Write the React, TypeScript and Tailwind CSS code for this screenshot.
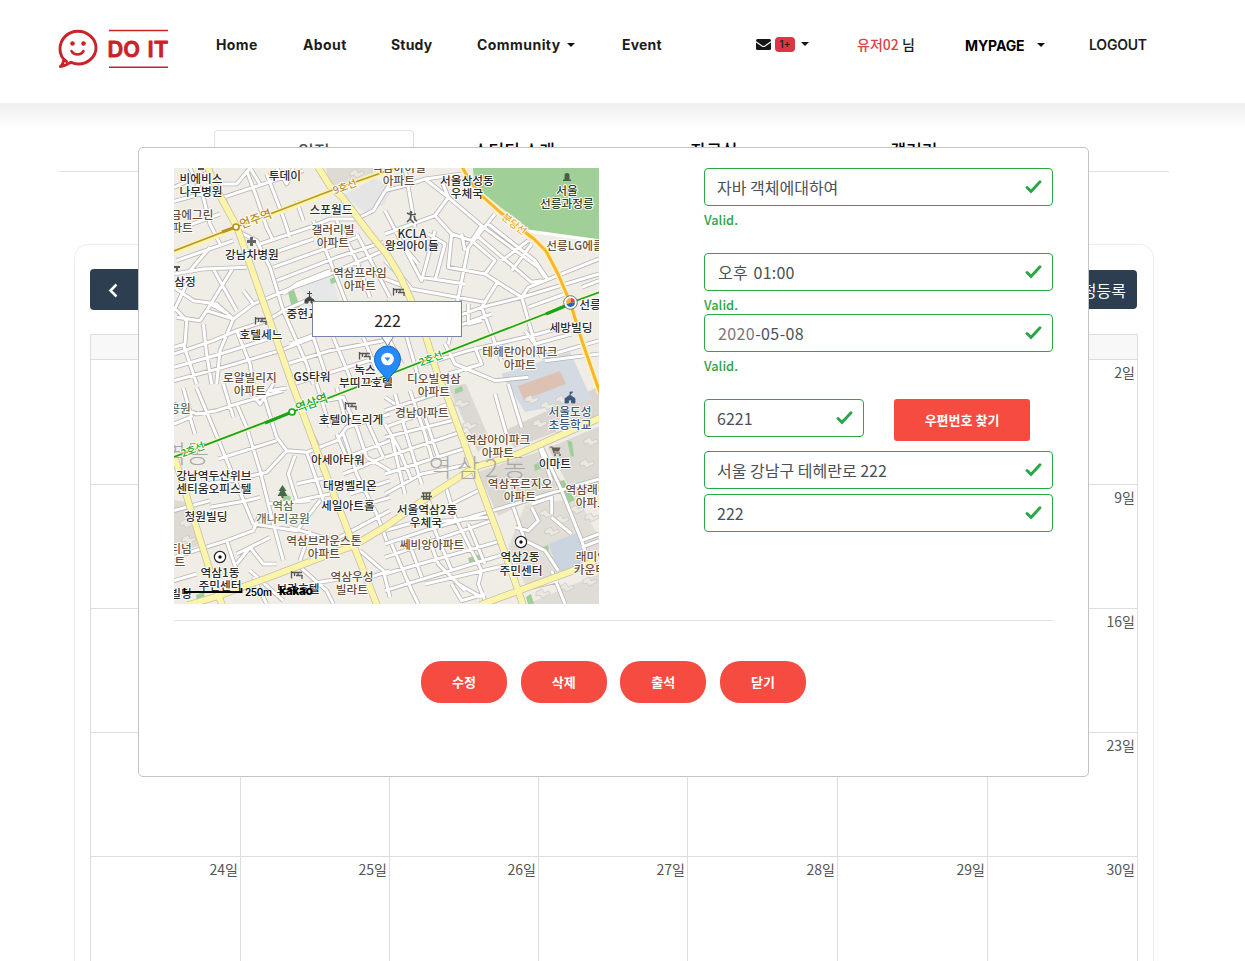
import React from "react";

const KR = "font-['Noto_Sans_CJK_KR','Noto_Sans',sans-serif]";

type Tile = { x: number; y: number; roads: string[] };

// Street segments; each tile is drawn at three units per map pixel.
const tiles: Tile[] = [
  {
    x: 170,
    y: 164,
    roads: [
      "M12 70L60 48L130 20", "M12 112L130 80L160 100L400 20", "M60 12L100 100L120 180L150 240", "M150 60L200 60L240 12",
      "M230 20L260 100L290 190L310 230", "M290 30L340 160L360 220", "M160 100L190 170", "M380 110L400 170", "M12 200L150 150",
      "M20 290L190 230", "M12 330L100 315L230 310", "M190 310L110 440", "M60 320L120 250", "M130 315L200 440",
      "M12 370L70 410L140 420L190 465", "M12 430L50 470L45 540L12 550", "M50 360L12 440", "M110 440L190 465L250 420L370 370L480 330L640 260",
      "M120 420L175 450", "M200 200L260 230L300 310L340 440L410 600L430 660", "M270 240L420 190L480 165L560 165L610 140L640 90L660 60",
      "M300 270L430 225", "M310 310L560 220", "M320 350L500 280L640 235", "M340 390L380 360L480 320", "M430 170L480 290L530 420",
      "M500 170L560 290L600 400", "M560 210L660 400", "M190 465L150 560L140 660", "M12 570L130 530L200 500L290 470L340 440",
      "M12 610L150 570L310 520", "M40 540L60 600L80 660", "M100 480L110 570L125 660", "M200 500L240 600L250 660",
      "M12 650L160 610L330 560L430 520", "M350 600L480 560L640 530", "M370 660L660 570", "M430 520L470 640", "M490 520L540 640",
      "M580 520L620 620", "M340 440L430 400", "M360 540L440 510L560 510", "M20 460L90 470L110 440", "M220 380L250 420",
      "M240 12L270 60", "M320 12L350 60L370 12",
    ],
  },
  {
    x: 385,
    y: 164,
    roads: [
      "M0 80L60 65L120 45L230 30", "M60 12L80 130L90 190", "M120 45L190 100L150 155L0 210", "M190 100L290 185L260 230L200 210",
      "M150 155L200 210L190 310L300 330L330 290L260 230", "M130 210L180 240L150 350", "M150 200L110 350L0 140", "M110 340L240 360",
      "M80 375L300 415", "M330 150L250 250L220 400L190 540", "M290 185L460 310L480 340", "M270 210L440 355L470 350",
      "M310 180L450 290L490 350", "M350 290L430 230", "M380 320L440 240", "M300 330L410 400L430 370L642 285", "M410 400L642 330",
      "M340 350L290 430L350 590", "M180 470L290 430L410 400", "M410 400L450 540L470 580", "M430 430L540 390", "M290 470L250 480L250 420",
      "M180 500L320 450", "M180 540L210 600L330 650L430 640", "M120 600L250 560L460 510L530 490", "M190 630L290 600L270 550",
      "M470 580L642 530", "M420 500L450 540L560 510", "M0 290L60 350L80 375L0 345", "M0 410L60 500L100 640", "M50 240L100 300",
      "M480 590L642 570", "M590 370L642 350", "M230 210L240 260", "M0 500L50 600", "M170 50L190 100",
    ],
  },
  {
    x: 170,
    y: 384,
    roads: [
      "M12 60L80 90L140 80L200 60L340 20", "M80 12L150 180L250 420", "M12 120L60 100L75 150", "M40 12L65 100", "M160 0L190 100",
      "M200 60L230 130L270 260L310 420", "M280 30L320 160L350 200L410 205L500 170L530 130L660 90", "M145 225L320 170",
      "M180 290L290 265L350 200", "M375 215L355 270L380 350L480 330", "M380 300L470 280", "M410 205L430 260L460 350",
      "M100 300L180 290", "M120 370L230 350L270 340", "M12 380L120 350", "M12 520L170 470L250 440L270 390", "M170 470L200 560L180 620",
      "M250 420L380 440L450 350", "M290 360L420 350", "M310 420L340 530", "M360 430L490 470L660 380", "M420 440L390 530",
      "M200 540L240 490L300 460", "M200 510L240 490L280 540L320 540", "M240 560L340 650", "M380 540L470 620L490 660",
      "M520 150L560 270L620 390", "M560 130L590 220L660 260", "M590 110L640 220", "M500 150L530 220L660 170", "M520 270L640 220",
      "M540 330L660 290", "M560 370L660 340", "M620 390L650 470", "M570 500L640 560L660 640", "M600 580L660 560",
      "M300 20L350 12", "M400 100L450 200", "M230 12L270 60L310 0", "M410 60L520 40L560 130", "M440 0L480 130", "M500 10L530 120",
      "M250 580L290 660", "M12 590L80 570", "M420 600L590 570",
    ],
  },
  {
    x: 385,
    y: 384,
    roads: [
      "M0 80L180 20", "M0 130L190 60", "M0 160L200 110", "M30 30L70 170L110 300", "M75 20L120 150L140 220", "M120 100L160 220",
      "M0 220L240 140", "M0 270L250 190", "M20 160L60 330", "M0 330L110 270L260 240", "M30 60L0 40", "M0 120L40 190L80 290",
      "M110 350L150 440L200 560", "M180 300L210 400L290 560", "M200 360L280 320", "M0 440L70 420L310 400", "M0 480L120 440L642 285",
      "M0 520L320 410", "M20 480L80 620L100 660", "M0 570L350 470", "M70 470L110 580", "M130 460L160 540L240 620",
      "M0 620L360 510", "M120 600L380 540", "M220 600L290 640", "M200 600L230 650L300 630", "M290 560L280 600L300 650",
      "M385 370L420 470L480 500L520 560", "M440 370L460 410L430 440L390 430", "M470 190L530 320L590 470L600 500",
      "M500 400L560 450", "M440 360L500 340L500 390", "M590 470L642 450", "M590 490L642 470", "M330 30L370 170", "M370 0L410 130",
      "M460 180L500 290", "M160 420L130 350", "M500 560L540 660", "M440 610L520 590", "M250 420L300 540",
    ],
  },
];

const majorRoads = [
  "M208 168L218 192L237 227L264 304L292 384L317 451L353 544L377 605",
  "M318 167L330 186L342 197L370 234L388 256L400 276L422 324L438 376L447 396L473 467L498 534L518 590L523 605",
  "M188 605L215 597L270 577L330 554L353 546L385 527L428 497L475 467L518 454L600 418",
  "M480 605L518 591L572 571L600 558",
  "M174 455L190 507L210 571L222 605",
];

const blocks: [string, string][] = [
  ["M326 168H398L330 188Z", "#dfdbd4"],
  ["M344 195L375 178L392 190L384 205L364 212Z", "#e5e5e6"],
  ["M300 284L330 274L345 318L312 318Z", "#e6e7e8"],
  ["M448 386L466 384L490 440L478 452Z", "#dcd8d3"],
  ["M506 430L600 386V415L514 448Z", "#dad6cf"],
  ["M478 472L538 452L564 484L498 516Z", "#dcd8d2"],
  ["M548 448L600 426V488L575 498Z", "#dcd8d2"],
  ["M525 505L578 498L600 540V556L525 585L508 548Z", "#e1ddd7"],
  ["M174 500L187 502L202 545L174 552Z", "#dedad2"],
  ["M527 604L599 574V604Z", "#dfdbd6"],
  ["M501 374L570 352L592 400L525 412Z", "#d3dae2"],
  ["M518 386L560 371L566 384L524 400Z", "#ddc2b4"],
  ["M549 544L577 533L587 566L558 572Z", "#cad5df"],
];

const greens = [
  "M473 168H599V240L530 231L518 220L504 210L484 194L474 181Z",
  "M288 292L294 290L300 307L292 309Z", "M330 279L338 275L340 281L331 284Z", "M281 494L290 496L292 501L283 501Z",
  "M468 558L480 554L481 560L470 565Z", "M534 465L541 461L542 468L535 471Z", "M556 483L564 480L575 500L566 504Z",
  "M541 548L548 545L549 550L544 552Z", "M526 597L531 594L534 604H528Z", "M196 595L204 592L205 600L197 602Z",
  "M455 389L462 386L463 391L455 394Z", "M567 440L572 442L574 456L571 457Z",
];

const aptOutlines = [
  [525, 398], [541, 404], [556, 398], [533, 422], [551, 427], [584, 440], [580, 462], [518, 478], [504, 488], [537, 480],
  [540, 512], [555, 518], [570, 508], [545, 530], [585, 516], [536, 592], [560, 586], [583, 580], [350, 172], [372, 170],
  [455, 402], [463, 424], [180, 522], [182, 538],
];

type Label = [x: number, y: number, text: string, fill?: string];
const BR = "#67503b";
const DK = "#2b2b2b";
const labels: Label[] = [
  [201, 182, "비에비스"], [201, 195, "나무병원"], [285, 179, "투데이"], [331, 213, "스포월드"],
  [399, 171, "역삼아이빌", BR], [399, 184, "아파트", BR], [467, 184, "서울삼성동"], [467, 197, "우체국"],
  [567, 194, "서울", "#2d432a"], [567, 207, "선릉과정릉", "#2d432a"],
  [192, 218, "금에그린", BR], [182, 231, "파트", BR], [333, 233, "갤러리빌", BR], [333, 246, "아파트", BR],
  [412, 237, "KCLA"], [412, 249, "왕의아이들"], [575, 249, "선릉LG에클", BR], [252, 258, "강남차병원"],
  [360, 276, "역삼프라임", BR], [360, 289, "아파트", BR], [185, 285, "삼정"], [308, 317, "중현교회"],
  [590, 308, "선릉"], [571, 331, "세방빌딩"], [261, 338, "호텔세느"],
  [520, 355, "테헤란아이파크", BR], [520, 368, "아파트", BR],
  [250, 381, "로얄빌리지", BR], [250, 394, "아파트", BR], [312, 380, "GS타워"], [365, 373, "녹스"], [366, 386, "부띠끄호텔"],
  [434, 382, "디오빌역삼", BR], [434, 395, "아파트", BR], [180, 412, "공원", "#5c7258"],
  [351, 423, "호텔아드리게"], [422, 416, "경남아파트", BR], [570, 415, "서울도성", "#3d5878"], [570, 428, "초등학교", "#3d5878"],
  [498, 443, "역삼아이파크", BR], [498, 456, "아파트", BR], [338, 463, "아세아타워"], [555, 467, "이마트"],
  [214, 479, "강남역두산위브"], [214, 492, "센티움오피스텔"], [350, 489, "대명벨리온"],
  [520, 487, "역삼푸르지오", BR], [520, 500, "아파트", BR], [587, 493, "역삼래미", BR], [592, 506, "아파트", BR],
  [283, 509, "역삼", "#5c7258"], [283, 522, "개나리공원", "#5c7258"], [348, 509, "세일아트홀"],
  [427, 513, "서울역삼2동"], [426, 526, "우체국"], [206, 520, "청원빌딩"],
  [324, 544, "역삼브라운스톤", BR], [324, 557, "아파트", BR], [432, 548, "쎄비앙아파트", BR],
  [181, 552, "티넘", BR], [180, 565, "트", BR], [520, 560, "역삼2동"], [521, 574, "주민센터"],
  [592, 560, "래미안", BR], [590, 573, "카운티", BR], [220, 576, "역삼1동"], [220, 589, "주민센터"],
  [352, 580, "역삼우성", BR], [352, 593, "빌라트", BR], [181, 597, "빌딩"], [298, 592, "브라호텔"],
];

function Bed({ x, y }: { x: number; y: number }) {
  return <path transform={`translate(${x} ${y})`} d="M.5 0V7.500M0 1.500H11M3.500 1.500V5M5 4.500H11V8M7 1.500V4.500" fill="none" stroke="#555" strokeWidth="1.300" />;
}

function StreetMap() {
  return (
    <svg className="block h-[436px] w-[425px] font-['Noto_Sans_CJK_KR',sans-serif]" viewBox="174 168 425 436">
      <rect x="174" y="168" width="425" height="436" fill="#f0ede7" />
      {blocks.map(([d, fill]) => <path key={d} d={d} fill={fill} />)}
      {greens.map((d, i) => <path key={d} d={d} fill={i === 0 ? "#a0d097" : "#9dcf99"} />)}
      {aptOutlines.map(([x, y]) => (
        <path key={`${x}-${y}`} d={`M${x} ${y}l6 -3 2 4 5 -2 1 3 -8 4 -2 -3 -4 1z`} fill="#ebe8e3" stroke="#c9c5bf" strokeWidth=".7" />
      ))}
      <g fill="none" strokeLinejoin="round">
        {tiles.map((t) => (
          <path key={`c${t.x}-${t.y}`} transform={`translate(${t.x} ${t.y}) scale(.33333)`} d={t.roads.join("")} stroke="#b9b5b5" strokeWidth="14" />
        ))}
        {tiles.map((t) => (
          <path key={`r${t.x}-${t.y}`} transform={`translate(${t.x} ${t.y}) scale(.33333)`} d={t.roads.join("")} stroke="#fff" strokeWidth="9" />
        ))}
        <path d="M528 231L600 241" stroke="#fff" strokeWidth="3" />
        <path d={majorRoads.join("")} stroke="#c6c1a8" strokeWidth="7.400" />
        <path d={majorRoads.join("")} stroke="#fcf5a9" strokeWidth="5.800" />
        <path d="M174 252L236 228L330 192L398 167" stroke="#fbf3b2" strokeWidth="6" />
        <path d="M174 251L236 227L330 191L398 167" stroke="#bd9a24" strokeWidth="1.700" />
        <path d="M222 232L236 227" stroke="#b8931d" strokeWidth="3.200" />
        <path d="M174 457L292 412L357 387L398 371L545 314L570 303L600 292" stroke="#f7f2cf" strokeWidth="4.500" />
        <path d="M174 457L292 412L357 387L398 371L545 314L570 303L600 292" stroke="#17a51b" strokeWidth="1.800" />
        <path d="M265 423L292 412M546 314L568 305" stroke="#17a51b" strokeWidth="3" />
        <path d="M461 165L470 181L482 196L500 212L518 227L534 239L546 251L558 274L570 302L582 341L600 393" stroke="#fff2c0" strokeWidth="6" />
        <path d="M461 165L470 181L482 196L500 212L518 227L534 239L546 251L558 274L570 302L582 341L600 393" stroke="#f9b526" strokeWidth="3" />
      </g>
      <circle cx="236" cy="227" r="3" fill="#fff" stroke="#b8931d" strokeWidth="1.700" />
      <circle cx="292" cy="412" r="3" fill="#fff" stroke="#17a51b" strokeWidth="1.700" />

      <g fill="#aaa7a5" fontSize="25" textAnchor="middle" fontWeight="300">
        <text x="480" y="477" letterSpacing="5">역삼2동</text>
        <text x="186" y="463">역동</text>
      </g>

      <g textAnchor="middle" stroke="#fff" strokeWidth="1.800" strokeLinejoin="round" paintOrder="stroke">
        <g fontSize="11" fontWeight="500">
          <text transform="translate(346 190) rotate(-21)" fontSize="10" fill="#b78c25">9호선</text>
          <text transform="translate(257 223) rotate(-20)" fontSize="12" fill="#b78c25">언주역</text>
          <text transform="translate(512 227) rotate(38)" fontSize="10" fill="#f3a51f">분당선</text>
          <text transform="translate(432 362) rotate(-21)" fontSize="10" fill="#17a51b">2호선</text>
          <text transform="translate(313 407) rotate(-20)" fontSize="12" fill="#17a51b">역삼역</text>
          <text transform="translate(194 453) rotate(-21)" fontSize="10" fill="#17a51b">2호선</text>
        </g>
        <g fontSize="11.700" fontWeight="500">
          {labels.map(([x, y, text, fill]) => (
            <text key={`${x}-${y}`} x={x} y={y + 0.5} fill={fill ?? DK}>{text}</text>
          ))}
        </g>
      </g>

      <Bed x={255} y={317} />
      <Bed x={393} y={288} />
      <Bed x={359} y={352} />
      <Bed x={345} y={402} />
      <Bed x={291} y={571} />
      <path d="M250 237h3v3h3v3h-3v3h-3v-3h-3v-3h3z" fill="#666" />
      <path d="M174 266h6v2h-2v3h-2v-3h-2M198 168h6v2h-6" fill="#555" />
      <path d="M309.500 291v6M307 293.500h5M305 303v-3l4.500 -3.500 4.500 3.500v3h-3v-2.500h-3v2.500z" fill="#444" stroke="#444" />
      <path d="M563 181v-1.500h1.500V175q0 -2 2.500 -2t2.500 2v4.500h1.500v1.500z" fill="#4e5a4b" />
      <path d="M407 213l4 2 5 -1M411 215l-1 4 4 4M410 219l-3 3M414 216l1 4 2 1" fill="none" stroke="#555" strokeWidth="1.500" />
      <circle cx="411" cy="212.500" r="1.400" fill="#555" />
      <path d="M565 403v-4.500l5 -3.500 5 3.500v4.500h-3.500v-3h-3v3zM570 395v-3h3" fill="#3d5878" stroke="#3d5878" strokeWidth=".8" />
      <path d="M549.500 447h2.500l2 6h6" fill="none" stroke="#665d55" strokeWidth="1.200" />
      <path d="M552.500 447.500h8l-1.500 4h-5.500z" fill="#665d55" />
      <circle cx="555" cy="455" r="1" fill="#665d55" />
      <circle cx="560" cy="455" r="1" fill="#665d55" />
      <path d="M422 493h9M421 496.500h11M423.500 493v7M429.500 493v7M423 499h7M426.500 493v6" fill="none" stroke="#555" strokeWidth="1.300" />
      <path d="M282.500 485l-4 6h2l-3 5h4v2h2v-2h4l-3 -5h2z" fill="#45684a" />
      {[[220, 557], [521, 542]].map(([x, y]) => (
        <g key={x}>
          <circle cx={x} cy={y} r="5.600" fill="#fff" stroke="#222" strokeWidth="1.200" />
          <circle cx={x} cy={y} r="1.700" fill="#111" />
        </g>
      ))}
      <circle cx="570.500" cy="302.500" r="6.800" fill="#fff" stroke="#555" strokeWidth=".8" />
      <path d="M570.500 302.500V298a4.500 4.500 0 0 1 4.500 4.500z" fill="#e23c33" />
      <path d="M570.500 302.500V298a4.500 4.500 0 0 0 -4 6.500z" fill="#f5ae2b" />
      <path d="M570.500 302.500l-4 2a4.500 4.500 0 0 0 8.500 -2z" fill="#2a63b7" />

      <path d="M184.500 588V592H241.500V588" fill="none" stroke="#000" strokeWidth="1.800" />
      <text x="245" y="596" fontSize="10" fontWeight="600" fontFamily="Inter, sans-serif" textLength="27" stroke="#fff" strokeWidth="1" paintOrder="stroke">250m</text>
      <text x="279" y="595" fontSize="12" fontWeight="800" fontFamily="Inter, sans-serif" textLength="34">kakao</text>

      <path d="M387.500 382C385 374 374.500 370 374.500 359a13 13 0 0 1 26 0C400.500 370 390 374 387.500 382z" fill="#258bfa" stroke="#1765bd" strokeWidth="1" />
      <circle cx="387.500" cy="359" r="6.300" fill="#fff" />
      <path d="M384.500 357.500h6l-3 3.600z" fill="#258bfa" />
      <path d="M381 336L387.500 346L394 336" fill="#fff" stroke="#7484aa" strokeWidth="1" />
      <rect x="312.500" y="301.500" width="149" height="35" fill="#fff" stroke="#7484aa" />
      <text x="387.500" y="326.500" fontSize="16" textAnchor="middle" fill="#212529">222</text>
    </svg>
  );
}

function Caret() {
  return <span className="inline-block h-0 w-0 border-x-[4px] border-t-[4px] border-x-transparent border-t-[#111]" />;
}

function Check() {
  return (
    <svg className="h-4 w-[17px] shrink-0" viewBox="0 0 17 16" fill="none">
      <path d="M2 8.500L6 12.400L15 2.800" stroke="#28a745" strokeWidth="2.900" strokeLinecap="round" />
    </svg>
  );
}

function Field({ value, className = "" }: { value: React.ReactNode; className?: string }) {
  return (
    <div className={`flex h-[38px] items-center justify-between rounded-[4px] border border-[#28a745] bg-white pr-[10px] pl-3 text-[16px] leading-6 text-[#495057] ${className}`}>
      <span>{value}</span>
      <Check />
    </div>
  );
}

function Valid({ className = "" }: { className?: string }) {
  return <div className={`text-[12.8px] leading-[19px] font-medium text-[#28a745] ${className}`}>Valid.</div>;
}

function Logo() {
  return (
    <svg className="h-[42px] w-[112px]" viewBox="57 28 112 42" fill="none" stroke="#cb2128">
      <path d="M66.500 61.500C62 58.500 60 54 60 49c0-10 8-17.700 17.700-17.700S96 38.500 96 47.800 87.500 64 78.500 64c-3 0-5.500-.8-7.500-1.800-3.500 2-7 4-10.700 4.300 2.500-1 3.200-5.500 3.700-7.300" strokeWidth="2.900" strokeLinecap="round" strokeLinejoin="round" />
      <path d="M71.500 51.200c2.500 4.300 9.500 4.300 12 0" strokeWidth="2.600" strokeLinecap="round" />
      <circle cx="72.500" cy="43.500" r="2.300" fill="#cb2128" stroke="none" />
      <circle cx="83.500" cy="43.500" r="2.300" fill="#cb2128" stroke="none" />
      <path d="M109 30.500H168M109 67.300H168" strokeWidth="1.600" />
      <g fontSize="21.500" fontWeight="600" fontFamily="Inter, sans-serif" fill="#cb2128" strokeWidth=".8" strokeLinejoin="round">
        <text x="107.500" y="57" textLength="32.500" lengthAdjust="spacingAndGlyphs">DO</text>
        <text x="147.500" y="57" textLength="21" lengthAdjust="spacingAndGlyphs">IT</text>
      </g>
    </svg>
  );
}

function Header() {
  return (
    <header className="relative flex h-[103px] bg-white pl-[57px]">
      <div className="absolute top-[103px] left-0 h-[26px] w-full bg-linear-to-b from-[#efefef] to-white" />
      <div className="w-[159px] shrink-0 pt-7"><Logo /></div>
      <nav className="flex h-[89px] items-center font-['Inter',sans-serif] text-[14px] font-bold text-[#1c1c1c]">
        <span className="w-[87px] tracking-[0.4px]">Home</span>
        <span className="w-[88px] tracking-[0.4px]">About</span>
        <span className="w-[86px] tracking-[0.2px]">Study</span>
        <span className="flex w-[145px] items-center gap-[6px] tracking-[0.45px]">Community <Caret /></span>
        <span className="w-[134px] tracking-[0.2px]">Event</span>
        <span className="flex w-[101px] items-center">
          <svg className="h-[11px] w-[15px]" viewBox="0 0 15 11">
            <rect y="0" width="15" height="11" rx="1.500" fill="#161616" />
            <path d="M0 2.800L6 7Q7.500 8 9 7L15 2.800" fill="none" stroke="#fff" strokeWidth="1.100" />
          </svg>
          <span className="ml-1 flex h-[15px] w-5 items-center justify-center rounded-[4px] bg-[#dc3545] text-[10px] font-medium">1+</span>
          <span className="mb-px ml-[6px] flex"><Caret /></span>
        </span>
        <span className={`w-[108px] font-medium whitespace-nowrap ${KR}`}><span className="text-[#d9434b]">유저02</span> 님</span>
        <span className="flex w-[124px] items-center justify-between pr-[44px] text-[14px] tracking-[-0.1px] text-black"><span className="pt-[2px]">MYPAGE</span> <Caret /></span>
        <span className="text-[14px] font-semibold tracking-[-0.2px]">LOGOUT</span>
      </nav>
    </header>
  );
}

const weeks = [
  ["", "", "", "", "", "", "2일"],
  ["", "", "", "", "", "", "9일"],
  ["", "", "", "", "", "", "16일"],
  ["", "", "", "", "", "", "23일"],
  ["24일", "25일", "26일", "27일", "28일", "29일", "30일"],
];

function Calendar() {
  return (
    <section className="mt-[72px] ml-[74px] h-[800px] w-[1080px] rounded-t-[14px] border border-[#ededed] px-[15px] pt-6">
      <div className="flex justify-between pr-px">
        <div className="flex h-[41px] w-[90px] items-center rounded-[4px] bg-[#2c3e50] pt-[2px] pl-[18px]">
          <svg className="h-[15px] w-[10px]" viewBox="0 0 10 15" fill="none"><path d="M8.500 1.500L2.500 7.500L8.500 13.500" stroke="#fff" strokeWidth="2.600" /></svg>
        </div>
        <div className="mt-px flex h-[39px] w-[84px] items-center justify-end rounded-[4px] bg-[#2c3e50] pr-[11px] text-[16px] whitespace-nowrap text-white">일정등록</div>
      </div>
      <div className="mt-6 border-t border-l border-[#ddd]">
        <div className="h-[25px] border-r border-b border-[#ddd] bg-[#f8f8f8]" />
        {weeks.map((week, row) => (
          <div key={week[6]} className={`grid grid-cols-[150px_149px_149px_149px_150px_150px_150px] border-b border-[#ddd] ${row === 0 ? "h-[125px]" : "h-[124px]"}`}>
            {week.map((day, i) => (
              <div key={i} className="border-r border-[#ddd] pt-[2px] pr-[2px] text-right text-[14px] leading-[20px] text-[#555]">{day}</div>
            ))}
          </div>
        ))}
      </div>
    </section>
  );
}

function Modal() {
  return (
    <div className="absolute top-[147px] left-[138px] h-[630px] w-[951px] rounded-[5px] border border-[#c4c4c4] bg-white px-[35px] pt-5">
      <div className="flex h-[453px] justify-between border-b border-[#e2e2e2]">
        <StreetMap />
        <div className="w-[349px]">
          <Field value="자바 객체에대하여" />
          <Valid className="mt-1 mb-[24px]" />
          <Field value={<span className="ml-px tracking-[0.2px] [word-spacing:2px]">오후 01:00</span>} />
          <Valid className="mt-1" />
          <Field value={<span className="ml-px tracking-[0.4px]"><span className="text-[#777]">2020</span>-05-08</span>} />
          <Valid className="mt-1 mb-6" />
          <div className="mb-[10px] flex gap-[30px]">
            <Field value="6221" className="w-40" />
            <button className="h-[42px] w-[136px] rounded-[3px] bg-[#f64b40] text-[13px] font-bold text-white">우편번호 찾기</button>
          </div>
          <Field value="서울 강남구 테헤란로 222" className="mb-[5px]" />
          <Field value="222" />
        </div>
      </div>
      <div className="mt-10 flex gap-[13.67px] pl-[247px]">
        {["수정", "삭제", "출석", "닫기"].map((name) => (
          <button key={name} className="h-[42px] w-[86px] rounded-[20px] bg-[#f64b40] pb-px text-[13px] font-bold text-white">{name}</button>
        ))}
      </div>
    </div>
  );
}

export default function App() {
  return (
    <div className={`relative h-[961px] w-[1245px] overflow-hidden bg-white ${KR}`}>
      <Header />
      <div className="relative mt-[27px] ml-[59px] flex h-[42px] w-[1110px] border-b border-[#dee2e6] pl-[155px] text-center text-[17px] leading-[40px] font-medium text-black">
        <div className="h-[42px] w-[200px] rounded-t-[4px] border border-b-0 border-[#dee2e6] bg-white text-[#495057]">일정</div>
        <div className="w-[200px]">스터디 소개</div>
        <div className="w-[200px]">자료실</div>
        <div className="w-[200px]">갤러리</div>
      </div>
      <Calendar />
      <Modal />
    </div>
  );
}
